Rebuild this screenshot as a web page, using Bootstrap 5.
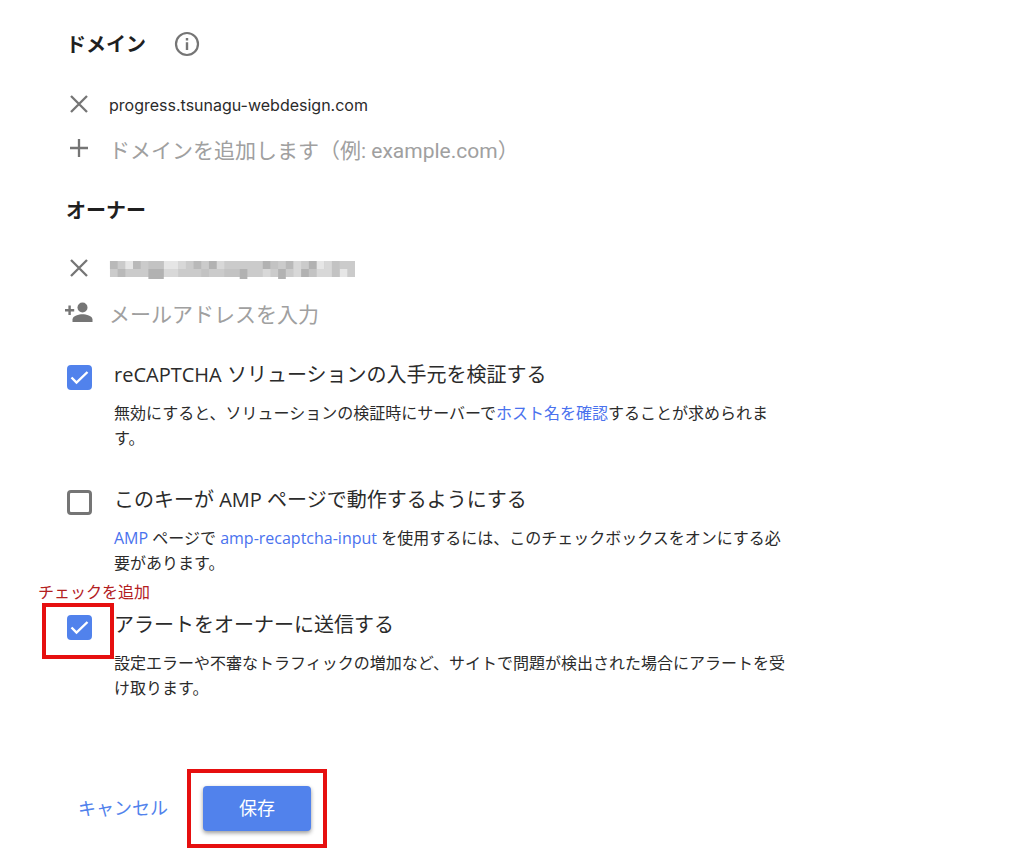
<!DOCTYPE html>
<html lang="ja">
<head>
<meta charset="utf-8">
<meta name="viewport" content="width=device-width, initial-scale=1">
<title>reCAPTCHA 設定</title>
<link href="https://cdn.jsdelivr.net/npm/bootstrap@5.3.0/dist/css/bootstrap.min.css" rel="stylesheet">
<style>
  body { font-family: Inter, "Noto Sans CJK JP", sans-serif; color: #2b2b2b; background: #fff; font-size: 16px; }
  .settings { max-width: 790px; padding: 28px 0 8px 66px; }
  .section-head { display: flex; align-items: center; gap: 28px; }
  .section-title { font-size: 20px; line-height: 30px; font-weight: 700; color: #1f1f1f; margin: 0; padding-top: 2px; }
  .icon-btn { width: 26px; height: 26px; padding: 0; border: 0; background: none; color: #757575; flex: none; display: flex; align-items: center; justify-content: center; }
  .icon-btn svg { overflow: visible; flex: none; }
  .entries { display: grid; gap: 14px; margin: 29px 0 31px; }
  .owner-entries { margin: 27px 0 33px; }
  .entry { display: flex; align-items: center; gap: 17px; height: 30px; }
  .entry-input { border: 0; padding: 6px 0 0; outline: 0; flex: 1; min-width: 0; background: none; font-family: Roboto, "Noto Sans CJK JP", sans-serif; font-size: 21px; line-height: 30px; }
  .entry-input::placeholder { color: #a0a0a0; opacity: 1; }
  .entry-text { padding-top: 2px; }
  .option { position: relative; display: flex; gap: 22px; align-items: flex-start; margin-bottom: 34px; font-family: "Open Sans", "Noto Sans CJK JP", sans-serif; }
  .option .form-check-input { width: 25px; height: 25px; margin: 5px 0 0 1px; border: 3px solid #757575; border-radius: 4px; flex: none; float: none; }
  .option .form-check-input:checked { background-color: #5182ec; border-color: #5182ec; background-size: 25px 25px;
    background-image: url("data:image/svg+xml,%3csvg xmlns='http://www.w3.org/2000/svg' viewBox='0 0 25 25'%3e%3cpath fill='none' stroke='%23fff' stroke-width='2.4' d='M4.5 12.5l5 5L20.5 7'/%3e%3c/svg%3e"); }
  .option-title { display: block; font-size: 20px; line-height: 30px; }
  .option-text { font-size: 16px; line-height: 25px; margin: 11px 0 0; }
  .option a { color: #4a72ee; text-decoration: none; }
  .callout-label { position: absolute; left: -28px; top: -30px; font-size: 16px; line-height: 24px; color: #b3201f; white-space: nowrap; }
  .callout-box { position: absolute; left: -24px; top: -7px; width: 72px; height: 56px; border: 4px solid #e60f0f; pointer-events: none; }
  .actions { display: flex; align-items: center; gap: 19px; margin-top: 68px; }
  .btn-flat, .btn-flat:hover { color: #5182ec; font-size: 18px; line-height: 27px; padding: 0 0 0 12px; border: 0; }
  .save-frame { border: 4px solid #e60f0f; padding: 13px 12px; }
  .btn-save, .btn-save:hover { display: block; width: 108px; height: 45px; padding: 0; border: 0; border-radius: 4px; background: #5182ec; color: #fff; font-size: 18px; box-shadow: 0 2px 4px rgba(0,0,0,.4); }
</style>
</head>
<body>
<main class="settings">
  <form>
    <section>
      <div class="section-head">
        <h2 class="section-title">ドメイン</h2>
        <button type="button" class="icon-btn" aria-label="情報">
          <svg width="26" height="26" viewBox="0 0 26 26"><circle cx="13" cy="13" r="11" fill="none" stroke="currentColor" stroke-width="2.2"/><path fill="currentColor" d="M11.8 7h2.4v2.4h-2.4zM11.8 11.3h2.4V19h-2.4z"/></svg>
        </button>
      </div>
      <div class="entries">
        <div class="entry">
          <button type="button" class="icon-btn" aria-label="削除"><svg width="26" height="26" viewBox="0 0 26 26"><path stroke="currentColor" stroke-width="2.3" d="M5 5l16 16M21 5L5 21"/></svg></button>
          <span class="entry-text">progress.tsunagu-webdesign.com</span>
        </div>
        <div class="entry">
          <button type="button" class="icon-btn" aria-label="追加"><svg width="26" height="26" viewBox="0 0 26 26"><path stroke="currentColor" stroke-width="2.3" d="M4 13h18M13 4v18"/></svg></button>
          <input class="entry-input" type="text" aria-label="ドメイン" placeholder="ドメインを追加します（例: example.com）">
        </div>
      </div>
    </section>

    <section>
      <h2 class="section-title">オーナー</h2>
      <div class="entries owner-entries">
        <div class="entry">
          <button type="button" class="icon-btn" aria-label="削除"><svg width="26" height="26" viewBox="0 0 26 26"><path stroke="currentColor" stroke-width="2.3" d="M5 5l16 16M21 5L5 21"/></svg></button>
          <!-- masked e-mail address -->
          <svg class="mt-1" width="246" height="18" viewBox="0 0 256 18" preserveAspectRatio="none" role="img" aria-label="非表示のメールアドレス">
            <path fill="#cbcbcb" d="M1 0h255v16H1z"/>
            <path fill="#b9b9b9" d="M1 0h8v8H1zM25 0h8v8h-8zM88 0h8v8h-8zM9 8h8v8H9zM184 0h8v8h-8z"/>
            <path fill="#e6e6e6" d="M17 0h8v8h-8zM57 0h15v8H57zM216 0h8v8h-8zM240 8h8v8h-8z"/>
            <path fill="#d8d8d8" d="M57 8h15v8H57zM72 0h8v8h-8zM112 0h8v8h-8zM160 8h8v8h-8zM192 0h8v16h-8zM216 8h16v8h-16zM224 0h8v8h-8z"/>
            <path fill="#c3c3c3" d="M41 0h16v8H41zM120 8h16v8h-16zM96 8h8v8h-8zM168 0h8v8h-8zM232 0h8v16h-8zM208 8h8v8h-8z"/>
            <path fill="#b2b2b2" d="M41 8h16v10H41zM104 0h8v8h-8zM136 8h8v10h-8zM160 0h8v8h-8zM176 8h8v10h-8zM200 8h8v8h-8zM208 0h8v8h-8z"/>
          </svg>
        </div>
        <div class="entry">
          <span class="icon-btn"><svg width="28" height="26" viewBox="0 0 28 26" fill="#757575"><path d="M0 10h3.400V6.500h2.400v3.500h3.400v2.400H5.800v3.500H3.400v-3.500H0z"/><circle cx="17.500" cy="8.500" r="5"/><path d="M7.500 23v-2.500c0-3.600 6.600-5.200 10-5.200s10 1.600 10 5.200v2.500z"/></svg></span>
          <input class="entry-input" type="email" aria-label="メールアドレス" placeholder="メールアドレスを入力">
        </div>
      </div>
    </section>

    <section>
      <div class="option">
        <input class="form-check-input" type="checkbox" id="verify" checked>
        <div>
          <label class="option-title" for="verify">reCAPTCHA ソリューションの入手元を検証する</label>
          <p class="option-text">無効にすると、ソリューションの検証時にサーバーで<a href="#">ホスト名を確認</a>することが求められます。</p>
        </div>
      </div>
      <div class="option">
        <input class="form-check-input" type="checkbox" id="amp">
        <div>
          <label class="option-title" for="amp">このキーが AMP ページで動作するようにする</label>
          <p class="option-text"><a href="#">AMP</a> ページで <a href="#">amp-recaptcha-input</a> を使用するには、このチェックボックスをオンにする必要があります。</p>
        </div>
      </div>
      <div class="option">
        <input class="form-check-input" type="checkbox" id="alerts" checked>
        <div>
          <label class="option-title" for="alerts">アラートをオーナーに送信する</label>
          <p class="option-text">設定エラーや不審なトラフィックの増加など、サイトで問題が検出された場合にアラートを受け取ります。</p>
        </div>
        <span class="callout-label">チェックを追加</span>
        <span class="callout-box"></span>
      </div>
    </section>

    <div class="actions">
      <button type="button" class="btn btn-flat">キャンセル</button>
      <div class="save-frame"><button type="submit" class="btn btn-save">保存</button></div>
    </div>
  </form>
</main>
<script src="https://cdn.jsdelivr.net/npm/bootstrap@5.3.0/dist/js/bootstrap.bundle.min.js"></script>
</body>
</html>
